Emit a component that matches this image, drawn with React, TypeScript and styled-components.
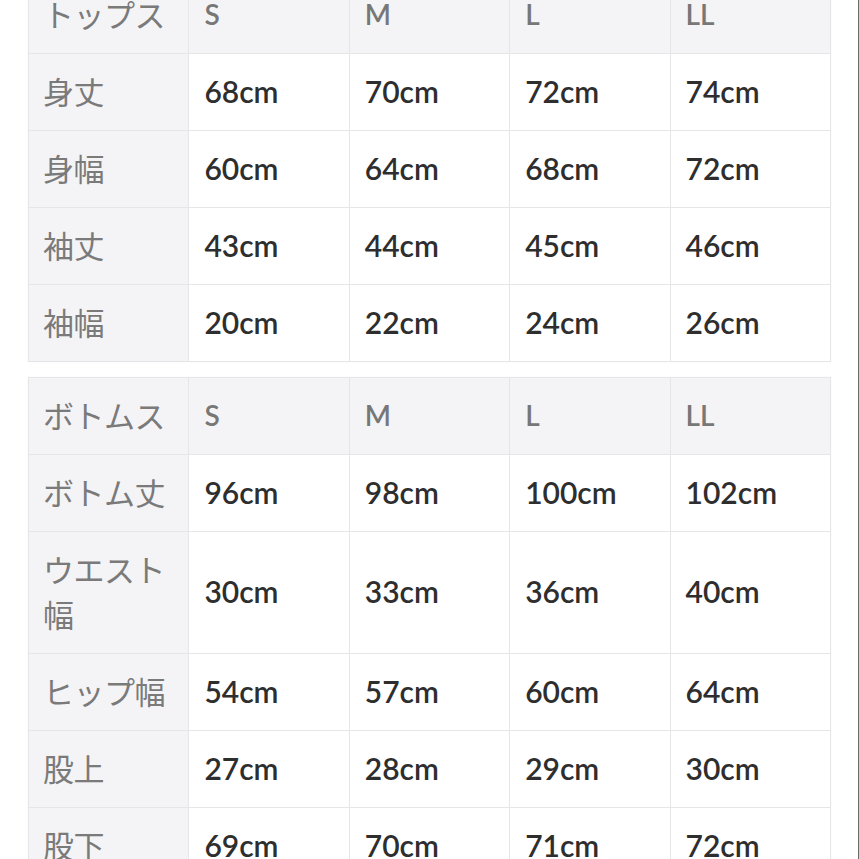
import styled, { createGlobalStyle } from 'styled-components';

type Row = { label: string; values: string[] };

const sizes = ['S', 'M', 'L', 'LL'];

const tops: Row[] = [
  { label: '身丈', values: ['68cm', '70cm', '72cm', '74cm'] },
  { label: '身幅', values: ['60cm', '64cm', '68cm', '72cm'] },
  { label: '袖丈', values: ['43cm', '44cm', '45cm', '46cm'] },
  { label: '袖幅', values: ['20cm', '22cm', '24cm', '26cm'] },
];

const bottoms: Row[] = [
  { label: 'ボトム丈', values: ['96cm', '98cm', '100cm', '102cm'] },
  { label: 'ウエスト幅', values: ['30cm', '33cm', '36cm', '40cm'] },
  { label: 'ヒップ幅', values: ['54cm', '57cm', '60cm', '64cm'] },
  { label: '股上', values: ['27cm', '28cm', '29cm', '30cm'] },
  { label: '股下', values: ['69cm', '70cm', '71cm', '72cm'] },
];

function SizeTable({ title, rows }: { title: string; rows: Row[] }) {
  return (
    <Table>
      <thead>
        <tr>
          <LabelCell as="th">{title}</LabelCell>
          {sizes.map((s) => (
            <HeadCell key={s}>{s}</HeadCell>
          ))}
        </tr>
      </thead>
      <tbody>
        {rows.map((r) => (
          <tr key={r.label}>
            <LabelCell>{r.label}</LabelCell>
            {r.values.map((v, i) => (
              <ValueCell key={i}>{v}</ValueCell>
            ))}
          </tr>
        ))}
      </tbody>
    </Table>
  );
}

function App() {
  return (
    <>
      <GlobalStyle />
      <Page>
        <Tables>
          <SizeTable title="トップス" rows={tops} />
          <SizeTable title="ボトムス" rows={bottoms} />
        </Tables>
      </Page>
    </>
  );
}

const GlobalStyle = createGlobalStyle`
  html, body {
    margin: 0;
    padding: 0;
    background: #fff;
    overflow: hidden;
  }
`;

const Page = styled.div`
  width: 859px;
  height: 859px;
  box-sizing: border-box;
  border-right: 1px solid #6a6a6a;
  overflow: hidden;
  background: #fff;
`;

const Tables = styled.div`
  display: flex;
  flex-direction: column;
  gap: 15px;
  padding-left: 28px;
  margin-top: -24px;
`;

const Table = styled.table`
  width: 803px;
  table-layout: fixed;
  border-collapse: collapse;
  border: 1px solid #e6e6e8;
  box-shadow: 0 0 1px rgba(0, 0, 0, 0.08);

  td, th {
    border: 1px solid #e6e6e8;
    height: 76px;
    vertical-align: middle;
    text-align: left;
    box-sizing: border-box;
  }
`;

const LabelCell = styled.td`
  background: #f4f4f6;
  color: #7a7a7a;
  font-family: 'Noto Sans CJK JP', sans-serif;
  font-size: 31px;
  font-weight: 400;
  line-height: 45px;
  padding: 13.5px 10px 17.5px 14px;
  letter-spacing: -0.5px;
`;

const HeadCell = styled.th`
  background: #f4f4f6;
  color: #777;
  font-family: Lato, 'Noto Sans', sans-serif;
  font-size: 28px;
  font-weight: 600;
  padding: 0 15px 3px;
`;

const ValueCell = styled.td`
  background: #fff;
  color: #2e2e2e;
  font-family: Lato, 'Noto Sans', sans-serif;
  font-size: 30px;
  font-weight: 600;
  padding: 0 15px 3px;
`;

export default App;
